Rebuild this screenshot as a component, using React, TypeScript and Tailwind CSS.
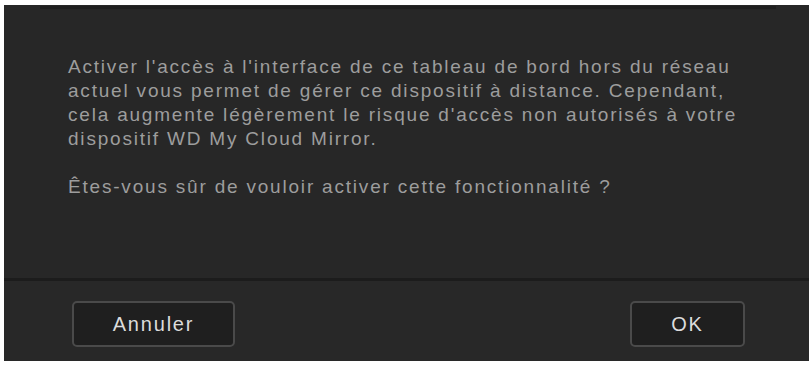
import React from "react";

// Confirmation dialog for enabling remote dashboard access
function DialogButton({ label, width }: { label: string; width: string }) {
  return (
    <button
      className={`${width} h-[46px] rounded-[5px] border-2 border-[#4a4a4a] bg-[#1f1f1f] text-[20px] tracking-[1.8px] text-[#dcdcdc]`}
    >
      {label}
    </button>
  );
}

export default function App() {
  return (
    <div
      className="w-[809px] h-[367px] bg-white pl-[4px] pt-[5px] pb-[6px]"
      style={{ fontFamily: '"Liberation Sans", Arial, sans-serif' }}
    >
      <div className="h-full bg-[#272727] flex flex-col">
        {/* header shadow */}
        <div className="h-[3px] ml-[36px] mr-[33px] mt-[1px] bg-[#1f1f1f]" />

        {/* message */}
        <div className="flex-1 pl-[64px] pt-[46px] text-[19px] leading-[24px] tracking-[1.8px] text-[#9d9d9d] whitespace-nowrap">
          <p>
            Activer l'accès à l'interface de ce tableau de bord hors du réseau
            <br />
            actuel vous permet de gérer ce dispositif à distance. Cependant,
            <br />
            cela augmente légèrement le risque d'accès non autorisés à votre
            <br />
            dispositif WD My Cloud Mirror.
          </p>
          <p className="mt-[24px]">
            Êtes-vous sûr de vouloir activer cette fonctionnalité ?
          </p>
        </div>

        {/* divider */}
        <div className="h-[3px] bg-[#1c1c1c]" />

        {/* actions */}
        <div className="h-[80px] flex items-start justify-between pl-[68px] pr-[64px] pt-[20px] bg-[#282828]">
          <DialogButton label="Annuler" width="w-[163px]" />
          <DialogButton label="OK" width="w-[115px]" />
        </div>
      </div>
    </div>
  );
}
